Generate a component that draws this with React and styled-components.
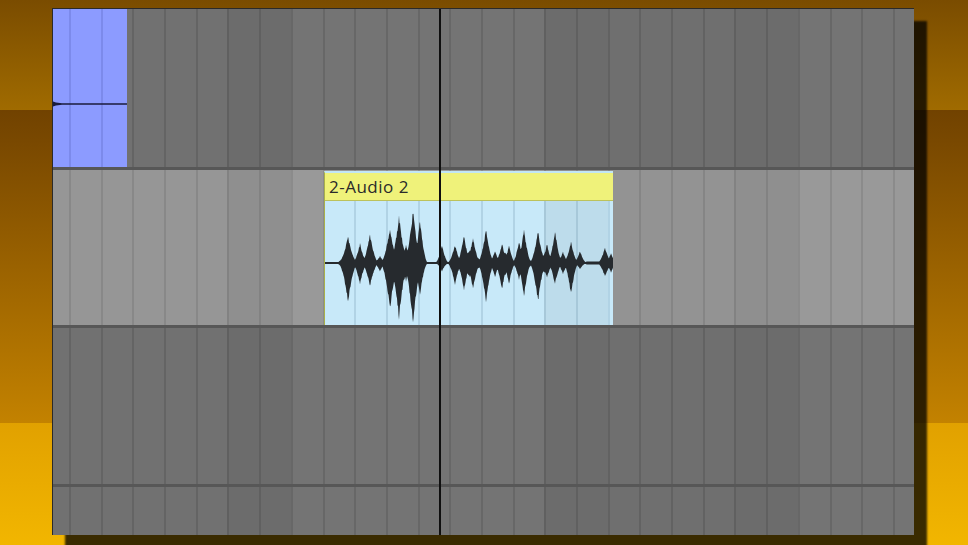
import React, { useMemo } from 'react';
import styled, { createGlobalStyle } from 'styled-components';

const GlobalStyle = createGlobalStyle`
  html, body { margin: 0; padding: 0; height: 100%; overflow: hidden; }
  body { font-family: "Open Sans", "Liberation Sans", sans-serif; }
  #root { height: 100%; }
`;

/* ---------- timeline geometry ---------- */
const PANEL_X = 53;           // page x of the panel's inner left edge
const LINE0 = 69;             // page x of the first grid line (left edge of its 2px stroke)
const STEP = 31.7;            // beat width in px
// tone of each beat column (index 0 = partial column before the first line)
const TONES = [
  'normal', 'normal', 'normal', 'normal', 'normal', 'normal',
  'dark', 'dark',
  'light', 'light', 'light', 'light', 'light', 'light', 'light', 'light',
  'dark', 'dark',
  'mid', 'mid', 'mid', 'mid',
  'dark', 'dark',
  'light', 'light', 'light', 'light', 'light',
];

function segments(x0, x1) {
  const out = [];
  let x = x0;
  let guard = 0;
  while (x < x1 - 0.01 && guard++ < 100) {
    const i = Math.floor((x - LINE0) / STEP + 1e-6) + 1;
    const cellEnd = LINE0 + i * STEP;
    const end = Math.min(cellEnd, x1);
    const onLine = i > 0 && Math.abs(x - (LINE0 + (i - 1) * STEP)) < 0.01;
    out.push({ w: end - x, tone: TONES[i] || 'light', line: onLine });
    x = end;
  }
  return out;
}

/* ---------- styled parts ---------- */
const Stage = styled.div`
  width: 100vw;
  height: 100vh;
  box-sizing: border-box;
  padding: 8px 0 0 52px;
  background: linear-gradient(
    to bottom,
    #7a4c00 0px,
    #a06b00 110px,
    #714200 110px,
    #c38200 423px,
    #e1a100 423px,
    #f2b600 545px
  );
`;

const Panel = styled.div`
  position: relative;
  width: 862px;
  height: 527px;
  box-sizing: border-box;
  border-top: 1px solid #2a2a2a;
  border-left: 1px solid #2a2a2a;
  background: #737373;
  box-shadow: 13px 13px 2px rgba(0, 0, 0, 0.76);
  display: flex;
  flex-direction: column;
  overflow: hidden;
`;

const Track = styled.div`
  position: relative;
  flex: none;
  height: ${(p) => p.$height}px;
  background: ${(p) => (p.$light ? '#989898' : '#737373')};
  border-bottom: ${(p) => (p.$last ? 'none' : '3px solid #575757')};
  overflow: hidden;
`;

const GridRow = styled.div`
  display: flex;
  height: 100%;
`;

const toneFill = {
  dark: 'rgba(0,0,0,0.055)',
  mid: 'rgba(0,0,0,0.03)',
  normal: 'rgba(0,0,0,0.012)',
  light: 'rgba(255,255,255,0.012)',
};

const Cell = styled.div`
  flex: none;
  height: 100%;
  box-sizing: border-box;
  border-left: ${(p) => (p.$line ? `2px solid ${p.$lineColor}` : 'none')};
  background: ${(p) => (p.$shade ? toneFill[p.$tone] : 'transparent')};
`;

const MidiClip = styled.div`
  position: absolute;
  left: 0;
  top: 0;
  bottom: 0;
  width: 74px;
  background: #8c9bff;
`;

const Overlay = styled.svg`
  position: absolute;
  left: 0;
  top: 0;
  width: 100%;
  height: 100%;
  overflow: visible;
`;

const AudioClip = styled.div`
  position: absolute;
  left: ${(p) => p.$left}px;
  width: ${(p) => p.$width}px;
  top: 1px;
  bottom: 0;
  box-sizing: border-box;
  border-left: 1px solid #a9b04a;
  border-top: 2px solid #c2e6f5;
  display: flex;
  flex-direction: column;
`;

const ClipHeader = styled.div`
  flex: none;
  height: 27px;
  background: #eff27a;
  border-bottom: 1px solid #bcc25c;
  color: #2a2a2a;
  font-family: "Open Sans", "Liberation Sans", sans-serif;
  font-size: 17px;
  line-height: 27px;
  letter-spacing: 0.5px;
  padding-left: 4px;
  white-space: nowrap;
`;

const ClipBody = styled.div`
  position: relative;
  flex: 1;
  background: #c8e9f9;
`;

const Playhead = styled.div`
  position: absolute;
  top: 0;
  bottom: 0;
  left: ${(p) => p.$x}px;
  width: 2px;
  background: #0f0f0f;
`;

/* ---------- grid ---------- */
function Grid({ x0, x1, lineColor, shadeMode = 'all' }) {
  const segs = useMemo(() => segments(x0, x1), [x0, x1]);
  return (
    <GridRow>
      {segs.map((s, i) => (
        <Cell
          key={i}
          style={{ width: `${s.w}px` }}
          $line={s.line}
          $lineColor={lineColor}
          $tone={s.tone}
          $shade={shadeMode === 'all' || (shadeMode === 'dark' && s.tone === 'dark')}
        />
      ))}
    </GridRow>
  );
}

/* ---------- waveform ---------- */
const PEAKS = [
  // [pageX, up, down, halfWidth]
  [346, 12, 14, 10], [348, 26, 38, 10],
  [360, 19, 21, 8], [370, 28, 23, 9], [380, 7, 8, 7],
  [400, 22, 26, 18], [415, 22, 24, 12],
  [390, 34, 45, 10], [399, 46, 55, 10], [406, 18, 18, 7],
  [413, 51, 61, 10], [420, 42, 31, 8],
  [442, 18, 8, 7],
  [470, 12, 14, 20], [505, 10, 12, 16], [525, 10, 12, 10],
  [455, 18, 21, 8], [464, 27, 28, 8], [473, 25, 26, 8],
  [486, 33, 38, 9], [495, 12, 14, 7], [502, 19, 26, 8],
  [509, 17, 21, 7], [519, 22, 16, 7], [524, 33, 33, 8],
  [545, 10, 10, 14], [570, 8, 9, 12],
  [538, 31, 38, 9], [547, 19, 15, 7], [555, 32, 21, 8],
  [563, 11, 11, 7], [571, 21, 31, 8], [580, 12, 6, 7],
  [605, 15, 14, 8], [611, 10, 10, 6],
];

function hash(x) {
  const s = Math.sin(x * 12.9898 + 4.1414) * 43758.5453;
  return s - Math.floor(s);
}

function baseline(px) {
  if (px > 586 && px < 602) return 1.6;
  return 1.1;
}

function buildWave(x0, width, cy) {
  const top = [];
  const bot = [];
  for (let x = 0; x <= width; x += 0.5) {
    const px = x0 + x;
    let u = 0;
    let d = 0;
    for (const [cx, a, b, w] of PEAKS) {
      const t = Math.abs(px - cx) / w;
      if (t < 1) {
        const f = Math.pow(1 - t, 1.8);
        u = Math.max(u, a * f);
        d = Math.max(d, b * f);
      }
    }
    const n1 = 0.92 + 0.14 * hash(Math.round(px * 2));
    const n2 = 0.92 + 0.14 * hash(Math.round(px * 2) + 91.3);
    const bl = baseline(px);
    u = Math.max(bl, u * n1);
    d = Math.max(bl, d * n2);
    top.push(`${x.toFixed(1)},${(cy - u).toFixed(2)}`);
    bot.push(`${x.toFixed(1)},${(cy + d).toFixed(2)}`);
  }
  return `M${top.join(' L')} L${bot.reverse().join(' L')} Z`;
}

function Waveform({ x0, width, height }) {
  const d = useMemo(() => buildWave(x0, width, height / 2), [x0, width, height]);
  return (
    <Overlay viewBox={`0 0 ${width} ${height}`} preserveAspectRatio="none">
      <path d={d} fill="#262a2e" />
    </Overlay>
  );
}

/* ---------- app ---------- */
const CLIP_X0 = 324;
const CLIP_X1 = 613;

export default function App() {
  return (
    <>
      <GlobalStyle />
      <Stage>
        <Panel>
          <Track $height={158}>
            <Grid x0={PANEL_X} x1={914} lineColor="rgba(0,0,0,0.11)" />
            <MidiClip>
              <Grid x0={PANEL_X} x1={127} lineColor="rgba(10,20,90,0.12)" shadeMode="none" />
              <Overlay viewBox="0 0 74 158">
                <path
                  d="M0,92.4 L3,93.4 L9,94.2 L74,94.2 L74,95.8 L9,95.8 L3,96.6 L0,97.6 Z"
                  fill="#1b1d3c"
                />
              </Overlay>
            </MidiClip>
          </Track>

          <Track $height={155} $light>
            <Grid x0={PANEL_X} x1={914} lineColor="rgba(0,0,0,0.09)" />
            <AudioClip $left={CLIP_X0 - PANEL_X} $width={CLIP_X1 - CLIP_X0}>
              <ClipHeader>2-Audio 2</ClipHeader>
              <ClipBody>
                <Grid
                  x0={CLIP_X0 + 1}
                  x1={CLIP_X1}
                  lineColor="rgba(20,70,100,0.13)"
                  shadeMode="dark"
                />
                <Waveform x0={CLIP_X0 + 1} width={CLIP_X1 - CLIP_X0 - 1} height={124} />
              </ClipBody>
            </AudioClip>
          </Track>

          <Track $height={156}>
            <Grid x0={PANEL_X} x1={914} lineColor="rgba(0,0,0,0.11)" />
          </Track>

          <Track $height={48} $last>
            <Grid x0={PANEL_X} x1={914} lineColor="rgba(0,0,0,0.11)" />
          </Track>

          <Playhead $x={386} />
        </Panel>
      </Stage>
    </>
  );
}
